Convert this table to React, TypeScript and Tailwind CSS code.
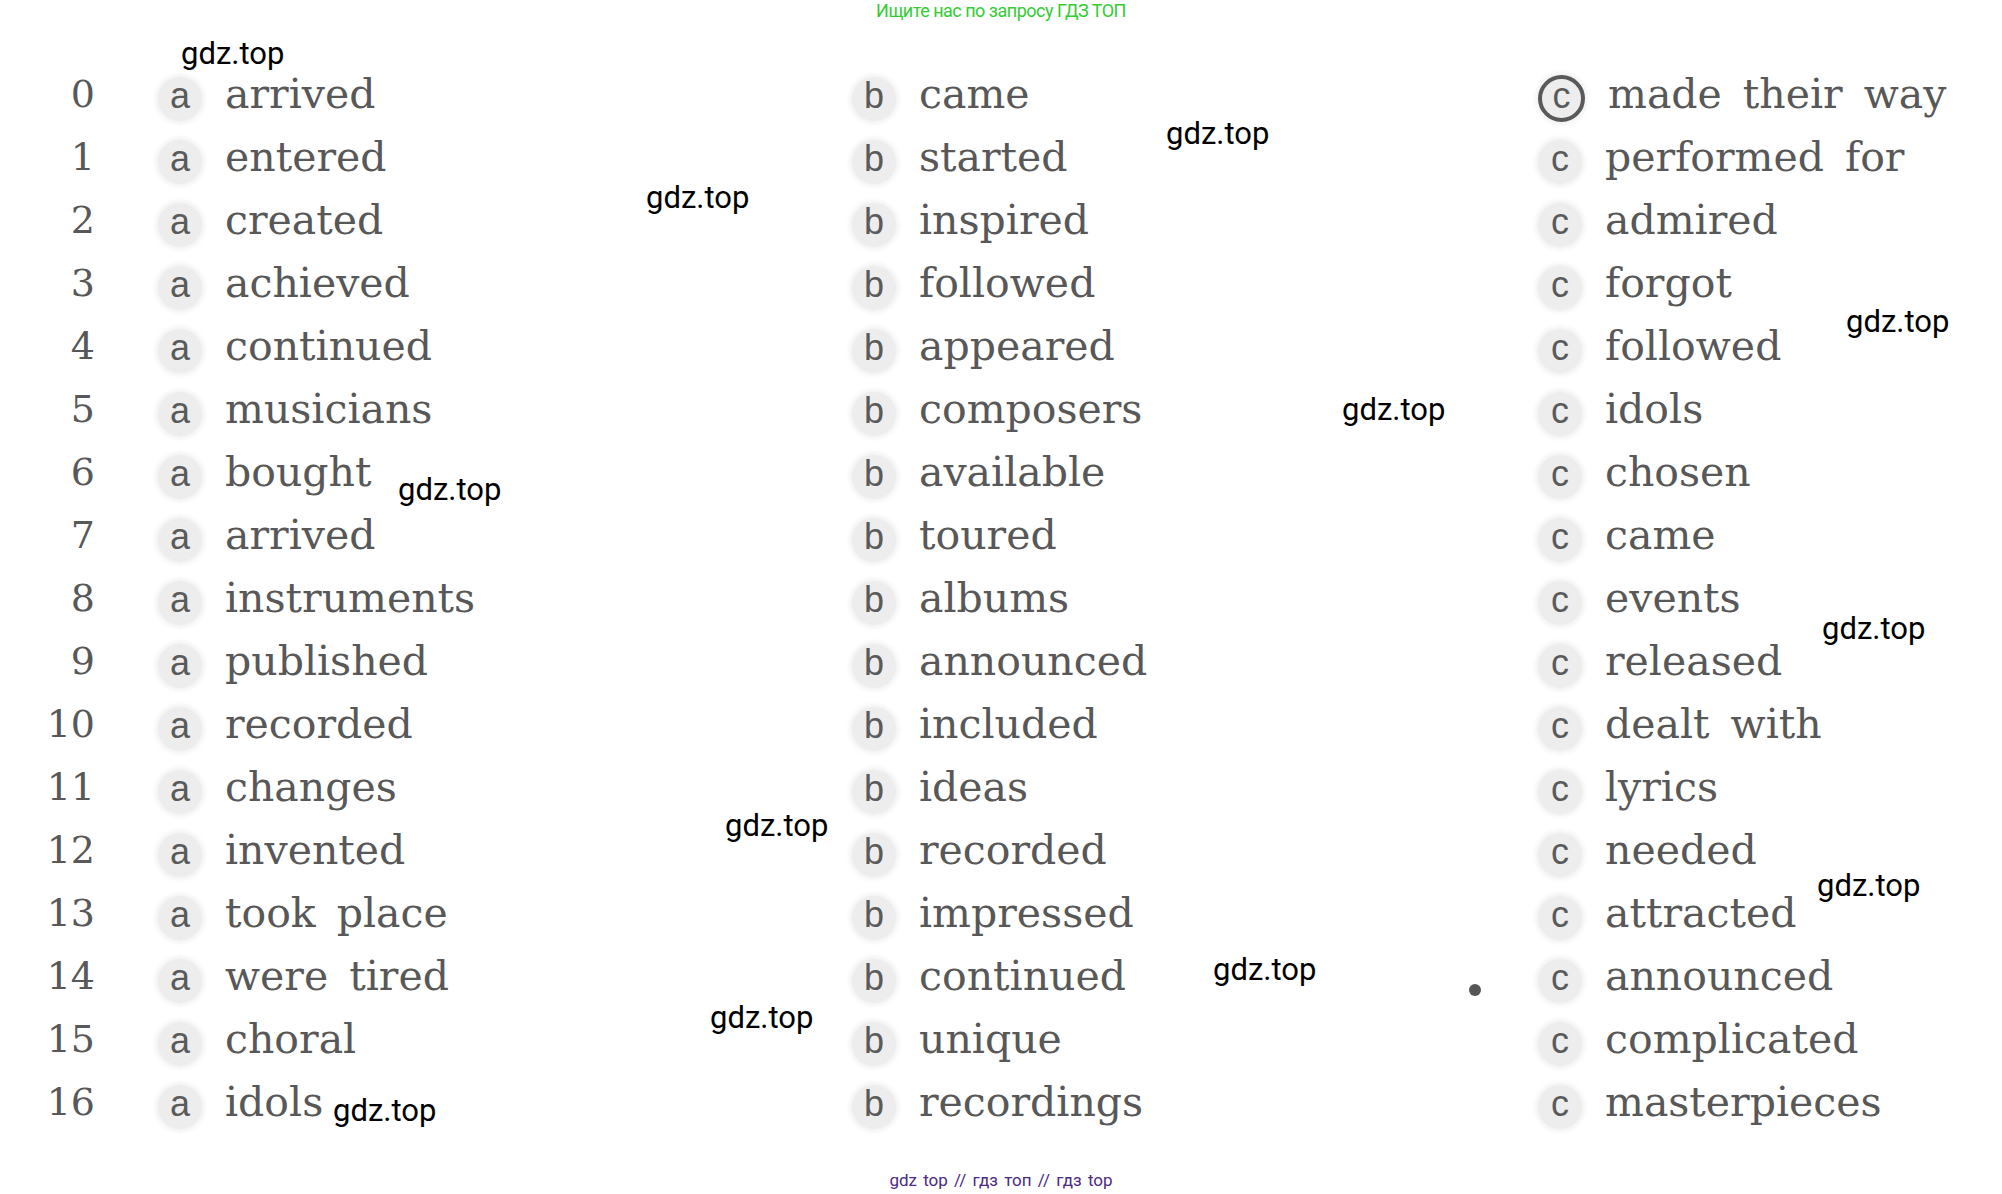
import React from 'react'

type Row = { n: number; a: string; b: string; c: string }

const rows: Row[] = [
  { n: 0, a: 'arrived', b: 'came', c: 'made their way' },
  { n: 1, a: 'entered', b: 'started', c: 'performed for' },
  { n: 2, a: 'created', b: 'inspired', c: 'admired' },
  { n: 3, a: 'achieved', b: 'followed', c: 'forgot' },
  { n: 4, a: 'continued', b: 'appeared', c: 'followed' },
  { n: 5, a: 'musicians', b: 'composers', c: 'idols' },
  { n: 6, a: 'bought', b: 'available', c: 'chosen' },
  { n: 7, a: 'arrived', b: 'toured', c: 'came' },
  { n: 8, a: 'instruments', b: 'albums', c: 'events' },
  { n: 9, a: 'published', b: 'announced', c: 'released' },
  { n: 10, a: 'recorded', b: 'included', c: 'dealt with' },
  { n: 11, a: 'changes', b: 'ideas', c: 'lyrics' },
  { n: 12, a: 'invented', b: 'recorded', c: 'needed' },
  { n: 13, a: 'took place', b: 'impressed', c: 'attracted' },
  { n: 14, a: 'were tired', b: 'continued', c: 'announced' },
  { n: 15, a: 'choral', b: 'unique', c: 'complicated' },
  { n: 16, a: 'idols', b: 'recordings', c: 'masterpieces' },
]

// watermark spots: left x and top y
const marks = [
  [181, 38],
  [1166, 118],
  [646, 182],
  [1846, 306],
  [1342, 394],
  [398, 474],
  [1822, 613],
  [725, 810],
  [1817, 870],
  [1213, 954],
  [710, 1002],
  [333, 1095],
]

const Letter = ({ l, picked }: { l: string; picked?: boolean }) => (
  <div
    className={
      'flex shrink-0 translate-y-[4px] items-center justify-center rounded-full bg-[#ededed] pb-[6px] shadow-[0_0_4px_3px_#f3f3f3] ' +
      (picked ? 'h-[47px] w-[47px] border-[4px] border-[#5a5a5a]' : 'h-[44px] w-[44px]')
    }
  >
    <span className="font-['Liberation_Sans',sans-serif] text-[36px] leading-none text-[#5a5a5a]">{l}</span>
  </div>
)

const Option = ({ l, word, picked, cls }: { l: string; word: string; picked?: boolean; cls: string }) => (
  <div className={'flex items-center gap-[23px] ' + cls}>
    <Letter l={l} picked={picked} />
    <span className="whitespace-nowrap text-[41px] leading-[63px] text-[#585858] [word-spacing:8px]">{word}</span>
  </div>
)

export default function App() {
  return (
    <div className="relative h-[1194px] w-[2002px] overflow-hidden bg-white">
      <div className="h-[22px] text-center font-['Roboto',sans-serif] text-[18px] leading-[22px] tracking-[-0.5px] text-[#33cc33]">
        Ищите нас по запросу ГДЗ ТОП
      </div>

      <div className="pt-[41px] font-['DejaVu_Serif',serif]">
        {rows.map((r) => (
          <div key={r.n} className="flex h-[63px] items-center">
            <div className="w-[95px] shrink-0 text-right text-[38px] leading-[63px] text-[#585858]">{r.n}</div>
            <Option l="a" word={r.a} cls="w-[690px] pl-[63px]" />
            <Option l="b" word={r.b} cls="w-[690px] pl-[67px]" />
            <Option l="c" word={r.c} picked={r.n === 0} cls="flex-1 pl-[63px]" />
          </div>
        ))}
      </div>

      <div className="mt-[36px] text-center font-['Roboto',sans-serif] text-[17px] leading-[20px] text-[#4c2a85] [word-spacing:2px]">
        gdz top {' '}//{' '} гдз топ {' '}//{' '} гдз top
      </div>

      {marks.map(([x, y], i) => (
        <div
          key={i}
          className="absolute font-['Roboto',sans-serif] text-[31px] leading-[31px] text-black"
          style={{ left: x, top: y }}
        >
          gdz.top
        </div>
      ))}

      <div className="absolute left-[1469px] top-[984px] h-[12px] w-[12px] rounded-full bg-[#555]" />
    </div>
  )
}
